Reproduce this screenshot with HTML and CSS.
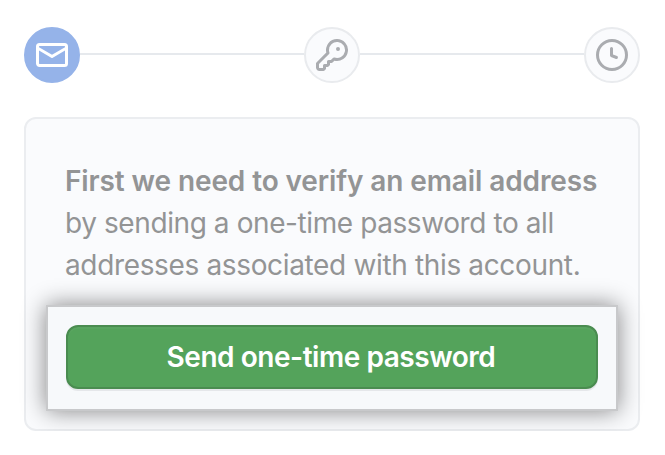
FILE: index.html
```html
<!DOCTYPE html>
<html lang="en">
<head>
<meta charset="utf-8">
<title>Verify email</title>
<link rel="stylesheet" href="styles.css">
</head>
<body>
<main class="page">
  <div class="steps">
    <div class="step step-active">
      <svg class="icon" viewBox="0 0 16 16"><path fill-rule="evenodd" d="M1.75 2A1.75 1.75 0 000 3.75v8.5C0 13.216.784 14 1.75 14h12.5A1.75 1.75 0 0016 12.25v-8.5A1.75 1.75 0 0014.25 2H1.75zM14.5 4.07v-.32a.25.25 0 00-.25-.25H1.75a.25.25 0 00-.25.25v.32L8 7.88l6.5-3.81zm-13 1.74v6.441c0 .138.112.25.25.25h12.5a.25.25 0 00.25-.25V5.809L8.38 9.397a.75.75 0 01-.76 0L1.5 5.809z"/></svg>
    </div>
    <div class="line"></div>
    <div class="step">
      <svg class="icon" viewBox="0 0 16 16"><path fill-rule="evenodd" d="M6.5 5.5a4 4 0 112.731 3.795.75.75 0 00-.768.18L7.44 10.5H6.25a.75.75 0 00-.75.75v1.19l-.06.06H4.25a.75.75 0 00-.75.75v1.19l-.06.06H1.75a.25.25 0 01-.25-.25v-1.69l5.024-5.023a.75.75 0 00.181-.768A3.995 3.995 0 016.5 5.5zm4-5.5a5.5 5.5 0 00-5.348 6.788L.22 11.72a.75.75 0 00-.22.53v2C0 15.216.784 16 1.75 16h2a.75.75 0 00.53-.22l.5-.5a.75.75 0 00.22-.53V14h.75a.75.75 0 00.53-.22l.5-.5a.75.75 0 00.22-.53V12h.75a.75.75 0 00.53-.22l.932-.932A5.5 5.5 0 1010.5 0zm.5 6a1 1 0 100-2 1 1 0 000 2z"/></svg>
    </div>
    <div class="line"></div>
    <div class="step">
      <svg class="icon" viewBox="0 0 16 16"><path fill-rule="evenodd" d="M1.5 8a6.5 6.5 0 1113 0 6.5 6.5 0 01-13 0zM8 0a8 8 0 100 16A8 8 0 008 0zm.5 4.75a.75.75 0 00-1.5 0v3.5a.75.75 0 00.471.696l2.5 1a.75.75 0 00.557-1.392L8.5 7.742V4.75z"/></svg>
    </div>
  </div>
  <section class="card">
    <p class="message"><strong class="lead">First we need to verify an email address</strong><span class="row">by sending a one-time password to all</span><span class="row row-last">addresses associated with this account.</span></p>
    <div class="spotlight">
      <button class="button">Send one-time password</button>
    </div>
  </section>
</main>
</body>
</html>
```
FILE: styles.css
```css
* { box-sizing: border-box; }
body {
  margin: 0;
  background: #fff;
  font-family: Inter, "Liberation Sans", sans-serif;
}
.page { width: 640px; padding: 27px 0 0 24px; }
.steps { display: flex; align-items: center; height: 56px; }
.step {
  display: flex;
  align-items: center;
  justify-content: center;
  width: 56px;
  height: 56px;
  flex: none;
  border: 2px solid #e9ebee;
  border-radius: 50%;
  background: #fafbfd;
  color: #aaacb0;
}
.step-active { border-color: #95b3e9; background: #95b3e9; color: #fff; }
.icon { width: 32px; height: 32px; fill: currentColor; }
.line { flex: 1; height: 2px; margin-bottom: 2px; background: #e6e9ed; }
.card {
  height: 314px;
  margin-top: 34px;
  padding: 41px 20px 0;
  border: 2px solid #ebedf0;
  border-radius: 12px;
  background: #fafbfd;
}
.message {
  margin: 0 0 0 19px;
  color: #939495;
  font-size: 28px;
  line-height: 42px;
  white-space: nowrap;
}
.lead, .row { display: block; }
.lead { font-weight: 600; letter-spacing: -0.11px; }
.row { letter-spacing: -0.41px; }
.row-last { letter-spacing: -0.35px; }
.spotlight {
  width: 572px;
  height: 106px;
  margin-top: 19px;
  padding: 18px;
  border: 2px solid #c8c9cb;
  background: #f7f9fb;
  box-shadow: 0 0 22px rgba(0, 0, 0, .48);
}
.button {
  display: block;
  width: 532px;
  height: 64px;
  padding: 0 2px 0 0;
  border: 2px solid #4a8c50;
  border-radius: 12px;
  background: #54a35b;
  box-shadow: 0 2px 0 rgba(27, 31, 35, .08), inset 0 2px 0 rgba(255, 255, 255, .03);
  color: #fff;
  font: 600 28px/42px Inter, "Liberation Sans", sans-serif;
  letter-spacing: -0.46px;
}
```
